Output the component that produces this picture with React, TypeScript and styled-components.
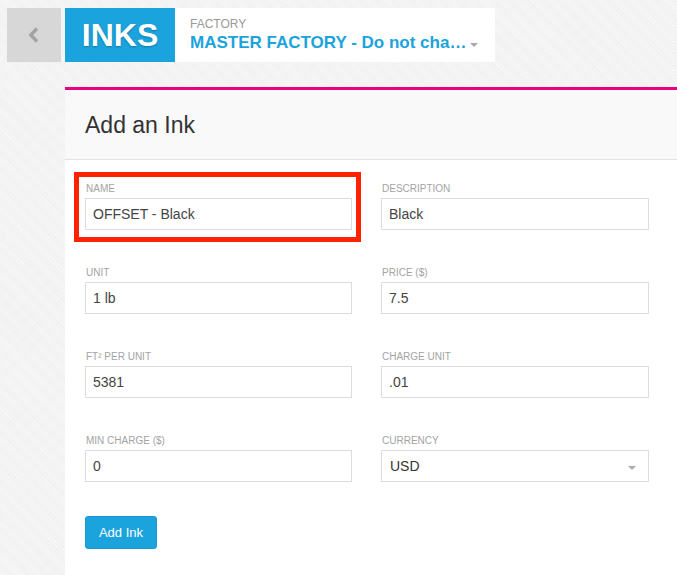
import React from "react";
import styled, { createGlobalStyle } from "styled-components";

const Global = createGlobalStyle`
  html, body { margin: 0; padding: 0; }
  body {
    font-family: "Liberation Sans", Arial, sans-serif;
    background-color: #f2f2f2;
    background-image:
      repeating-linear-gradient(45deg, rgba(255,255,255,0.35) 0 1px, transparent 1px 2px),
      repeating-linear-gradient(-45deg, rgba(0,0,0,0.012) 0 1px, transparent 1px 3px);
    min-height: 575px;
    overflow: hidden;
  }
`;

const Page = styled.div`
  width: 677px;
  height: 575px;
  overflow: hidden;
`;

const TopBar = styled.div`
  display: flex;
  align-items: stretch;
  padding: 8px 0 0 7px;
  height: 54px;
`;

const BackButton = styled.button`
  width: 54px;
  height: 54px;
  border: none;
  padding: 0;
  background: #d7d7d7;
  display: flex;
  align-items: center;
  justify-content: center;
  margin-right: 4px;
  cursor: pointer;
`;

const Brand = styled.div`
  width: 110px;
  height: 54px;
  background: #1aa3dc;
  color: #fff;
  font-weight: 700;
  font-size: 32px;
  display: flex;
  align-items: center;
  justify-content: center;
  text-shadow: 0 1px 2px rgba(0, 0, 0, 0.25);
`;

const FactoryBox = styled.div`
  width: 320px;
  box-sizing: border-box;
  background: #fff;
  padding: 9px 0 0 15px;
  display: flex;
  flex-direction: column;
`;

const FactoryLabel = styled.div`
  font-size: 12px;
  color: #999;
  line-height: 14px;
`;

const FactoryRow = styled.div`
  display: flex;
  align-items: center;
  margin-top: 2px;
`;

const FactoryName = styled.div`
  font-size: 17px;
  font-weight: 700;
  color: #1aa3dc;
  line-height: 20px;
  white-space: nowrap;
`;

const Caret = styled.span<{ $size?: number }>`
  display: inline-block;
  width: 0;
  height: 0;
  border-left: ${(p) => p.$size ?? 4}px solid transparent;
  border-right: ${(p) => p.$size ?? 4}px solid transparent;
  border-top: ${(p) => p.$size ?? 4}px solid #aaa;
  margin-left: 4px;
  margin-top: 3px;
`;

const Panel = styled.div`
  margin: 25px 0 0 65px;
  border-top: 3px solid #e8007f;
  background: #fff;
  height: 500px;
`;

const PanelHeader = styled.div`
  height: 69px;
  background: #f9f9f9;
  border-bottom: 1px solid #e3e3e3;
  display: flex;
  align-items: center;
  padding-left: 20px;
`;

const Title = styled.h1`
  margin: 0;
  font-size: 23px;
  font-weight: 400;
  color: #333;
  padding-top: 2px;
`;

const Form = styled.div`
  padding: 23px 0 0 20px;
`;

const Grid = styled.div`
  display: grid;
  grid-template-columns: 267px 268px;
  column-gap: 29px;
  row-gap: 37px;
`;

const Field = styled.div<{ $highlight?: boolean }>`
  position: relative;
  display: flex;
  flex-direction: column;
  ${(p) =>
    p.$highlight &&
    `
    &::after {
      content: "";
      position: absolute;
      left: -11px;
      right: -9px;
      top: -11px;
      bottom: -12px;
      border: 5px solid #ff2200;
      pointer-events: none;
    }
  `}
`;

const Label = styled.label`
  font-size: 10px;
  color: #a3a3a3;
  line-height: 12px;
  text-transform: uppercase;
  margin-bottom: 3px;
  padding-left: 1px;
`;

const Input = styled.input`
  box-sizing: border-box;
  height: 32px;
  width: 100%;
  border: 1px solid #dcdcdc;
  padding: 0 7px;
  font-family: "Liberation Sans", Arial, sans-serif;
  font-size: 14px;
  color: #444;
  background: #fff;
  outline: none;
`;

const SelectBox = styled.div`
  box-sizing: border-box;
  height: 32px;
  border: 1px solid #dcdcdc;
  padding: 0 12px 0 8px;
  display: flex;
  align-items: center;
  justify-content: space-between;
  font-size: 14px;
  color: #333;
`;

const SubmitButton = styled.button`
  margin-top: 34px;
  width: 72px;
  height: 33px;
  background: #1aa3dc;
  border: 1px solid #1797cc;
  border-radius: 3px;
  color: #fff;
  font-family: "Liberation Sans", Arial, sans-serif;
  font-size: 13px;
  padding: 0;
  cursor: pointer;
`;

const fields = [
  { label: "Name", value: "OFFSET - Black", highlight: true },
  { label: "Description", value: "Black" },
  { label: "Unit", value: "1 lb" },
  { label: "Price ($)", value: "7.5" },
  { label: "Ft² per unit", value: "5381" },
  { label: "Charge unit", value: ".01" },
  { label: "Min charge ($)", value: "0" },
];

export default function App() {
  return (
    <Page>
      <Global />
      <TopBar>
        <BackButton aria-label="Back">
          <svg width="14" height="16" viewBox="0 0 14 16">
            <path d="M10 1.5 L3.8 8 L10 14.5" fill="none" stroke="#a3a3a3" strokeWidth="3.4" />
          </svg>
        </BackButton>
        <Brand>INKS</Brand>
        <FactoryBox>
          <FactoryLabel>FACTORY</FactoryLabel>
          <FactoryRow>
            <FactoryName>MASTER FACTORY - Do not cha…</FactoryName>
            <Caret />
          </FactoryRow>
        </FactoryBox>
      </TopBar>
      <Panel>
        <PanelHeader>
          <Title>Add an Ink</Title>
        </PanelHeader>
        <Form>
          <Grid>
            {fields.map((f) => (
              <Field key={f.label} $highlight={f.highlight}>
                <Label>{f.label}</Label>
                <Input defaultValue={f.value} />
              </Field>
            ))}
            <Field>
              <Label>Currency</Label>
              <SelectBox>
                <span>USD</span>
                <Caret />
              </SelectBox>
            </Field>
          </Grid>
          <SubmitButton>Add Ink</SubmitButton>
        </Form>
      </Panel>
    </Page>
  );
}
